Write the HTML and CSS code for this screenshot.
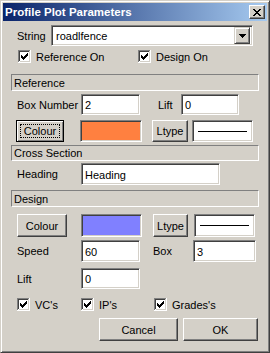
FILE: index.html
```html
<!DOCTYPE html>
<html lang="en">
<head>
    <meta charset="UTF-8">
    <title>Profile Plot Parameters</title>
    <link rel="stylesheet" href="styles.css">
</head>
<body>
<svg class="defs" width="0" height="0">
    <symbol id="checkbox" viewBox="0 0 13 13">
        <rect width="13" height="13" fill="#fff"/>
        <path d="M0 0H12V1H1V12H0Z" fill="#808080"/>
        <path d="M1 1H11V2H2V11H1Z" fill="#404040"/>
        <path d="M12 0H13V13H0V12H12Z" fill="#fff"/>
        <path d="M11 1H12V12H2V11H11Z" fill="#d4d0c8"/>
        <path d="M3 5h1v3h-1z M4 6h1v3h-1z M5 7h1v3h-1z M6 6h1v3h-1z M7 5h1v3h-1z M8 4h1v3h-1z M9 3h1v3h-1z" fill="#000"/>
    </symbol>
</svg>

<div class="window">
    <div class="titlebar">
        <span class="title">Profile Plot Parameters</span>
        <span class="close-btn">
            <svg width="8" height="7" viewBox="0 0 8 7" shape-rendering="crispEdges">
                <path d="M0 0h2v1h-2z M1 1h2v1h-2z M2 2h2v1h-2z M3 3h2v1h-2z M2 4h2v1h-2z M1 5h2v1h-2z M0 6h2v1h-2z
                         M6 0h2v1h-2z M5 1h2v1h-2z M4 2h2v1h-2z M4 4h2v1h-2z M5 5h2v1h-2z M6 6h2v1h-2z" fill="#000"/>
            </svg>
        </span>
    </div>

    <div class="dialog">
        <!-- String -->
        <div class="row row-string">
            <span class="label label-string">String</span>
            <div class="combo">
                <span class="combo-text">roadlfence</span>
                <span class="combo-btn">
                    <svg width="7" height="4" viewBox="0 0 7 4" shape-rendering="crispEdges">
                        <path d="M0 0h7v1h-7z M1 1h5v1h-5z M2 2h3v1h-3z M3 3h1v1h-1z" fill="#000"/>
                    </svg>
                </span>
            </div>
        </div>

        <div class="row row-checks-top">
            <span class="check check-ref"><svg width="13" height="13"><use href="#checkbox"/></svg>Reference On</span>
            <span class="check"><svg width="13" height="13"><use href="#checkbox"/></svg>Design On</span>
        </div>

        <!-- Reference -->
        <div class="section-bar bar-reference">Reference</div>

        <div class="row row-field row-boxnumber">
            <span class="label label-first">Box Number</span>
            <div class="input input-short">2</div>
            <span class="label label-lift">Lift</span>
            <div class="input input-lift">0</div>
        </div>

        <div class="row row-colour-ref">
            <span class="button button-default button-colour-ref"><span class="focus-rect">Colour</span></span>
            <span class="swatch swatch-ref"></span>
            <span class="button button-ltype-ref">Ltype</span>
            <span class="linebox linebox-ref"><span class="line"></span></span>
        </div>

        <!-- Cross Section -->
        <div class="section-bar bar-cross">Cross Section</div>

        <div class="row row-field row-heading">
            <span class="label label-first">Heading</span>
            <div class="input input-heading">Heading</div>
        </div>

        <!-- Design -->
        <div class="section-bar bar-design">Design</div>

        <div class="row row-colour-design">
            <span class="button button-colour-design">Colour</span>
            <span class="swatch swatch-design"></span>
            <span class="button button-ltype-design">Ltype</span>
            <span class="linebox linebox-design"><span class="line"></span></span>
        </div>

        <div class="row row-field row-speed">
            <span class="label label-first">Speed</span>
            <div class="input input-short">60</div>
            <span class="label label-box">Box</span>
            <div class="input input-box">3</div>
        </div>

        <div class="row row-field row-lift">
            <span class="label label-first">Lift</span>
            <div class="input input-short">0</div>
        </div>

        <div class="row row-checks-bottom">
            <span class="check check-vc"><svg width="13" height="13"><use href="#checkbox"/></svg>VC's</span>
            <span class="check check-ip"><svg width="13" height="13"><use href="#checkbox"/></svg>IP's</span>
            <span class="check"><svg width="13" height="13"><use href="#checkbox"/></svg>Grades's</span>
        </div>

        <div class="row row-buttons">
            <span class="button button-cancel">Cancel</span>
            <span class="button button-ok">OK</span>
        </div>
    </div>
</div>
</body>
</html>
```
FILE: styles.css
```css
body {
    margin: 0;
    font-family: "Liberation Sans", Arial, sans-serif;
    font-size: 11px;
    color: #000;
    background-color: #d4d0c8;
}

.defs {
    position: absolute;
}

.window {
    width: 270px;
    height: 353px;
    box-sizing: border-box;
    border: 1px solid;
    border-color: #d4d0c8 #404040 #404040 #d4d0c8;
    box-shadow: inset 1px 1px #fff, inset -1px -1px #808080;
    padding: 2px;
    background-color: #d4d0c8;
}

/* Title bar */
.titlebar {
    height: 18px;
    display: flex;
    align-items: center;
    justify-content: space-between;
    padding: 0 2px;
    background: linear-gradient(to right, #0a246a, #a6caf0);
    color: #fff;
}

.title {
    font-weight: bold;
    font-size: 11.5px;
}

.close-btn {
    width: 16px;
    height: 14px;
    box-sizing: border-box;
    display: flex;
    align-items: center;
    justify-content: center;
    background-color: #d4d0c8;
    border: 1px solid;
    border-color: #fff #404040 #404040 #fff;
    box-shadow: inset -1px -1px #808080;
}

/* Rows */
.row {
    display: flex;
    align-items: center;
}

.label-first {
    width: 64px;
    padding-left: 14px;
}

.label-string {
    width: 34px;
    padding-left: 14px;
}

.row-string {
    height: 21px;
    margin-top: 4px;
}

.row-checks-top {
    height: 13px;
    margin-top: 4px;
    padding-left: 15px;
}

.check {
    display: flex;
    align-items: center;
}

.check svg {
    margin-right: 5px;
}

.check-ref {
    width: 120px;
}

.row-boxnumber {
    height: 21px;
    margin-top: 3px;
}

.row-colour-ref {
    height: 22px;
    margin-top: 5px;
    padding-left: 13px;
}

.row-heading {
    height: 22px;
    margin-top: 2px;
}

.row-colour-design {
    height: 23px;
    margin-top: 7px;
    padding-left: 14px;
}

.row-speed {
    height: 22px;
    margin-top: 3px;
}

.row-lift {
    height: 21px;
    margin-top: 6px;
}

.row-checks-bottom {
    height: 13px;
    margin-top: 9px;
    padding-left: 14px;
}

.check-vc {
    width: 64px;
}

.check-ip {
    width: 73px;
}

.row-buttons {
    height: 23px;
    margin-top: 7px;
    justify-content: flex-end;
    gap: 5px;
    padding-right: 9px;
}

/* Section bars */
.section-bar {
    margin-left: 8px;
    width: 248px;
    box-sizing: border-box;
    border: 1px solid;
    border-color: #808080 #fff #fff #808080;
    padding-left: 2px;
    display: flex;
    align-items: center;
}

.bar-reference {
    height: 17px;
    margin-top: 11px;
}

.bar-cross {
    height: 16px;
    margin-top: 3px;
}

.bar-design {
    height: 17px;
    margin-top: 5px;
}

/* Sunken fields */
.input,
.combo,
.swatch,
.linebox {
    box-sizing: border-box;
    height: 100%;
    border: 1px solid;
    border-color: #808080 #fff #fff #808080;
    box-shadow: inset 1px 1px #404040, inset -1px -1px #d4d0c8;
    background-color: #fff;
}

.input {
    padding: 1px 0 0 3px;
    display: flex;
    align-items: center;
}

.input-short {
    width: 59px;
}

.label-lift {
    margin-left: 18px;
    width: 23px;
}

.input-lift {
    width: 58px;
}

.label-box {
    margin-left: 13px;
    width: 40px;
}

.input-box {
    width: 63px;
}

.input-heading {
    width: 139px;
}

.combo {
    width: 202px;
    display: flex;
    align-items: center;
    justify-content: space-between;
    padding: 2px;
}

.combo-text {
    padding-left: 2px;
}

.combo-btn {
    width: 16px;
    height: 17px;
    box-sizing: border-box;
    display: flex;
    align-items: center;
    justify-content: center;
    background-color: #d4d0c8;
    border: 1px solid;
    border-color: #d4d0c8 #404040 #404040 #d4d0c8;
    box-shadow: inset 1px 1px #fff, inset -1px -1px #808080;
}

/* Buttons */
.button {
    height: 100%;
    box-sizing: border-box;
    display: flex;
    align-items: center;
    justify-content: center;
    background-color: #d4d0c8;
    border: 1px solid;
    border-color: #fff #404040 #404040 #fff;
    box-shadow: inset -1px -1px #808080;
}

.button-default {
    border-color: #000;
    box-shadow: inset 1px 1px #fff, inset -1px -1px #808080, inset -2px -2px #d4d0c8;
    padding: 3px;
}

.focus-rect {
    flex: 1;
    align-self: stretch;
    display: flex;
    align-items: center;
    justify-content: center;
    border: 1px dotted #000;
}

.button-colour-ref {
    width: 48px;
}

.swatch {
    width: 62px;
}

.swatch-ref {
    margin-left: 16px;
    background-color: #ff8040;
}

.button-ltype-ref {
    margin-left: 10px;
    width: 36px;
}

.linebox {
    width: 61px;
    display: flex;
    align-items: center;
    padding: 0 5px;
}

.line {
    flex: 1;
    height: 1px;
    background-color: #000;
}

.linebox-ref {
    margin-left: 4px;
}

.button-colour-design {
    width: 50px;
}

.swatch-design {
    margin-left: 14px;
    width: 61px;
    background-color: #8080ff;
}

.button-ltype-design {
    margin-left: 11px;
    width: 35px;
}

.linebox-design {
    margin-left: 6px;
}

.button-cancel {
    width: 79px;
}

.button-ok {
    width: 75px;
}
```
